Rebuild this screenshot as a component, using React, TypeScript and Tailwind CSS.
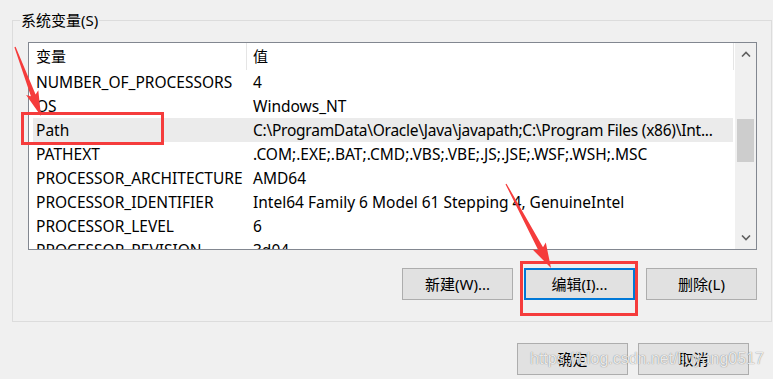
import React from "react";

interface EnvVar {
  name: string;
  value: string;
  selected?: boolean;
}

const VARS: EnvVar[] = [
  { name: "NUMBER_OF_PROCESSORS", value: "4" },
  { name: "OS", value: "Windows_NT" },
  {
    name: "Path",
    value: "C:\\ProgramData\\Oracle\\Java\\javapath;C:\\Program Files (x86)\\Int...",
    selected: true,
  },
  { name: "PATHEXT", value: ".COM;.EXE;.BAT;.CMD;.VBS;.VBE;.JS;.JSE;.WSF;.WSH;.MSC" },
  { name: "PROCESSOR_ARCHITECTURE", value: "AMD64" },
  { name: "PROCESSOR_IDENTIFIER", value: "Intel64 Family 6 Model 61 Stepping 4, GenuineIntel" },
  { name: "PROCESSOR_LEVEL", value: "6" },
  { name: "PROCESSOR_REVISION", value: "3d04" },
];

/**
 * Builds the polygon for a hand-drawn style annotation arrow:
 * thin at the tail, widening toward a triangular head at the tip.
 */
function arrowPoints(
  tx: number,
  ty: number,
  px: number,
  py: number,
  headLen: number,
  headW: number,
  shaftW: number
): string {
  const dx = px - tx;
  const dy = py - ty;
  const len = Math.hypot(dx, dy);
  const ux = dx / len;
  const uy = dy / len;
  const nx = -uy;
  const ny = ux;
  const bx = px - ux * headLen;
  const by = py - uy * headLen;
  const pts = [
    [tx + nx * 0.6, ty + ny * 0.6],
    [bx + (nx * shaftW) / 2, by + (ny * shaftW) / 2],
    [bx + (nx * headW) / 2 - ux * 3, by + (ny * headW) / 2 - uy * 3],
    [px, py],
    [bx - (nx * headW) / 2 - ux * 3, by - (ny * headW) / 2 - uy * 3],
    [bx - (nx * shaftW) / 2, by - (ny * shaftW) / 2],
    [tx - nx * 0.6, ty - ny * 0.6],
  ];
  return pts.map((p) => `${p[0].toFixed(1)},${p[1].toFixed(1)}`).join(" ");
}

function Chevron({ up }: { up?: boolean }) {
  return (
    <svg width="10" height="6" viewBox="0 0 10 6">
      <polyline
        points={up ? "1,5.5 5,1.5 9,5.5" : "1,0.5 5,4.5 9,0.5"}
        fill="none"
        stroke="#606060"
        strokeWidth="1.6"
      />
    </svg>
  );
}

function WinButton({ label, focused }: { label: string; focused?: boolean }) {
  return (
    <button
      className={
        focused
          ? "w-[111px] h-[32px] bg-[#e1e1e1] border-2 border-[#0078d7] text-[15px] text-black"
          : "w-[111px] h-[32px] bg-[#e1e1e1] border border-[#adadad] text-[15px] text-black"
      }
    >
      {label}
    </button>
  );
}

export default function App() {
  return (
    <div className="relative w-[773px] h-[379px] overflow-hidden bg-[#f0f0f0] font-['Noto_Sans','Noto_Sans_CJK_SC',sans-serif] text-black">
      <fieldset className="ml-[12px] mr-[1px] mt-[10px] h-[312px] border border-[#dcdcdc] p-0">
        <legend className="ml-[7px] px-[1px] text-[15px] leading-[20px]">系统变量(S)</legend>
        <div className="pl-[15px] pt-[12px]">
          {/* list view */}
          <div className="flex w-[729px] h-[208px] border border-[#828790] bg-white">
            <div className="w-[706px] overflow-hidden">
              <div className="flex h-[27px] items-center text-[15px]">
                <div className="w-[217px] pl-[7px]">变量</div>
                <div className="w-px h-full bg-[#e5e5e5]" />
                <div className="w-[486px] pl-[6px]">值</div>
                <div className="w-px h-full bg-[#e5e5e5]" />
              </div>
              {VARS.map((v) => (
                <div
                  key={v.name}
                  className={
                    v.selected
                      ? "ml-[4px] w-[700px] flex h-[24px] pt-[2px] items-center bg-[#ebebeb] text-[15.5px] whitespace-nowrap"
                      : "ml-[4px] w-[700px] flex h-[24px] pt-[2px] items-center text-[15.5px] whitespace-nowrap"
                  }
                >
                  <div className="w-[213px] pl-[3px] overflow-hidden">{v.name}</div>
                  <div
                    className={
                      v.selected
                        ? "flex-1 pl-[7px] overflow-hidden tracking-[-0.25px]"
                        : "flex-1 pl-[7px] overflow-hidden"
                    }
                  >
                    {v.value}
                  </div>
                </div>
              ))}
            </div>
            {/* scrollbar */}
            <div className="flex w-[21px] flex-col bg-[#f0f0f0]">
              <div className="flex h-[22px] items-center justify-center">
                <Chevron up />
              </div>
              <div className="flex-1">
                <div className="mx-[2px] mt-[54px] h-[43px] bg-[#cdcdcd]" />
              </div>
              <div className="flex h-[22px] items-center justify-center">
                <Chevron />
              </div>
            </div>
          </div>
          <div className="mt-[18px] flex w-[729px] justify-end gap-[11px]">
            <WinButton label="新建(W)..." />
            <WinButton label="编辑(I)..." focused />
            <WinButton label="删除(L)" />
          </div>
        </div>
      </fieldset>

      <div className="mt-[21px] mr-[24px] flex justify-end gap-[10px]">
        <WinButton label="确定" />
        <WinButton label="取消" />
      </div>

      {/* annotations */}
      <div className="absolute left-[21px] top-[112px] w-[143px] h-[33px] border-[3px] border-[#f53c3c]" />
      <div className="absolute left-[520px] top-[261px] w-[118px] h-[55px] border-[3px] border-[#f53c3c]" />
      <svg className="absolute inset-0 pointer-events-none" width="773" height="379">
        <polygon points={arrowPoints(15, 47, 41, 116, 22, 13, 5)} fill="#f53c3c" />
        <polygon points={arrowPoints(506, 184, 551, 268, 22, 15, 5.5)} fill="#f53c3c" />
      </svg>
      <div className="absolute left-[530px] top-[347px] text-[16px] font-['Liberation_Sans',sans-serif] text-[rgba(255,255,255,0.85)] [text-shadow:0_0_1px_rgba(0,0,0,0.55)] pointer-events-none">
        https://blog.csdn.net/liuyang0517
      </div>
    </div>
  );
}
